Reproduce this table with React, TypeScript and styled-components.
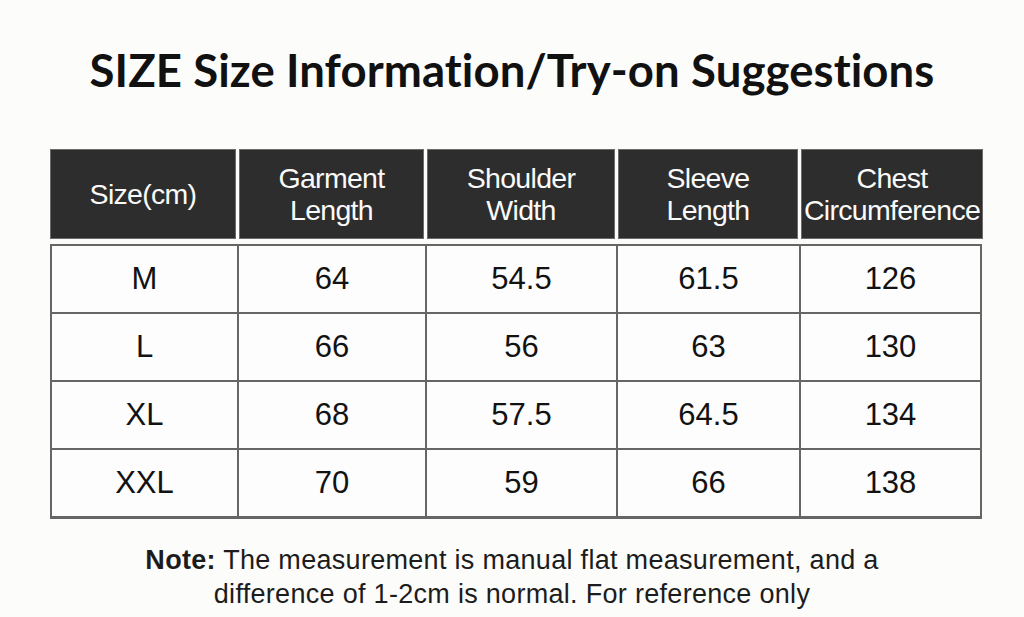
import styled, { createGlobalStyle } from 'styled-components';

const GlobalStyle = createGlobalStyle`
  html, body {
    margin: 0;
    padding: 0;
    background: #fcfcfb;
  }
  body {
    width: 1024px;
    height: 617px;
    overflow: hidden;
    font-family: "Liberation Sans", Arial, sans-serif;
    color: #151515;
  }
`

const Page = styled.div`
  display: flex;
  flex-direction: column;
  align-items: flex-start;
  padding: 42px 0 0 50px;
`

const Title = styled.h1`
  align-self: stretch;
  margin: 0 50px 0 0;
  text-align: center;
  font-family: Lato, "Open Sans", sans-serif;
  font-weight: 700;
  font-size: 45.5px;
  letter-spacing: 0.1px;
  line-height: 56px;
  font-variant-ligatures: none;
  color: #111;
`

const HeaderRow = styled.div`
  display: grid;
  grid-template-columns: 186px 185px 188px 180px 182px;
  column-gap: 3px;
  margin-top: 51px;
  width: 932px;
`

const HeaderCell = styled.div`
  height: 90px;
  box-sizing: border-box;
  display: flex;
  align-items: center;
  justify-content: center;
  text-align: center;
  background: #2d2d2d;
  border: 1px solid #6a6a6a;
  color: #fafafa;
  font-size: 28.5px;
  letter-spacing: -0.7px;
  line-height: 32px;
  white-space: nowrap;
`

const Body = styled.div`
  margin-top: 5px;
  width: 932px;
  border: 2px solid #666;
  border-bottom-width: 1px;
  box-sizing: border-box;
`

const Row = styled.div`
  display: grid;
  grid-template-columns: 187px 188px 191px 183px 1fr;
  height: 68px;
  border-bottom: 2px solid #666;
  box-sizing: border-box;
`

const Cell = styled.div<{ $last?: boolean }>`
  display: flex;
  align-items: center;
  justify-content: center;
  background: #fdfdfd;
  border-right: ${p => (p.$last ? 'none' : '2px solid #666')};
  font-size: 31px;
  color: #121212;
`

const Note = styled.p`
  align-self: stretch;
  margin: 24px 50px 0 0;
  text-align: center;
  font-size: 27px;
  line-height: 34px;
  letter-spacing: 0.3px;
  color: #1c1c1c;
  b {
    font-weight: 700;
  }
`

const headers = ['Size(cm)', 'Garment Length', 'Shoulder Width', 'Sleeve Length', 'Chest Circumference']

const rows = [
  ['M', '64', '54.5', '61.5', '126'],
  ['L', '66', '56', '63', '130'],
  ['XL', '68', '57.5', '64.5', '134'],
  ['XXL', '70', '59', '66', '138'],
]

const App = (): JSX.Element => {
  return (
    <>
      <GlobalStyle />
      <Page>
        <Title>SIZE Size Information/Try-on Suggestions</Title>
        <HeaderRow>
          {headers.map(h => (
            <HeaderCell key={h}>
              {h.includes(' ') ? (
                <span>{h.split(' ')[0]}<br />{h.split(' ')[1]}</span>
              ) : h}
            </HeaderCell>
          ))}
        </HeaderRow>
        <Body>
          {rows.map(r => (
            <Row key={r[0]}>
              {r.map((v, i) => (
                <Cell key={i} $last={i === r.length - 1}>{v}</Cell>
              ))}
            </Row>
          ))}
        </Body>
        <Note>
          <b>Note:</b> The measurement is manual flat measurement, and a<br />
          difference of 1-2cm is normal. For reference only
        </Note>
      </Page>
    </>
  )
}

export default App
